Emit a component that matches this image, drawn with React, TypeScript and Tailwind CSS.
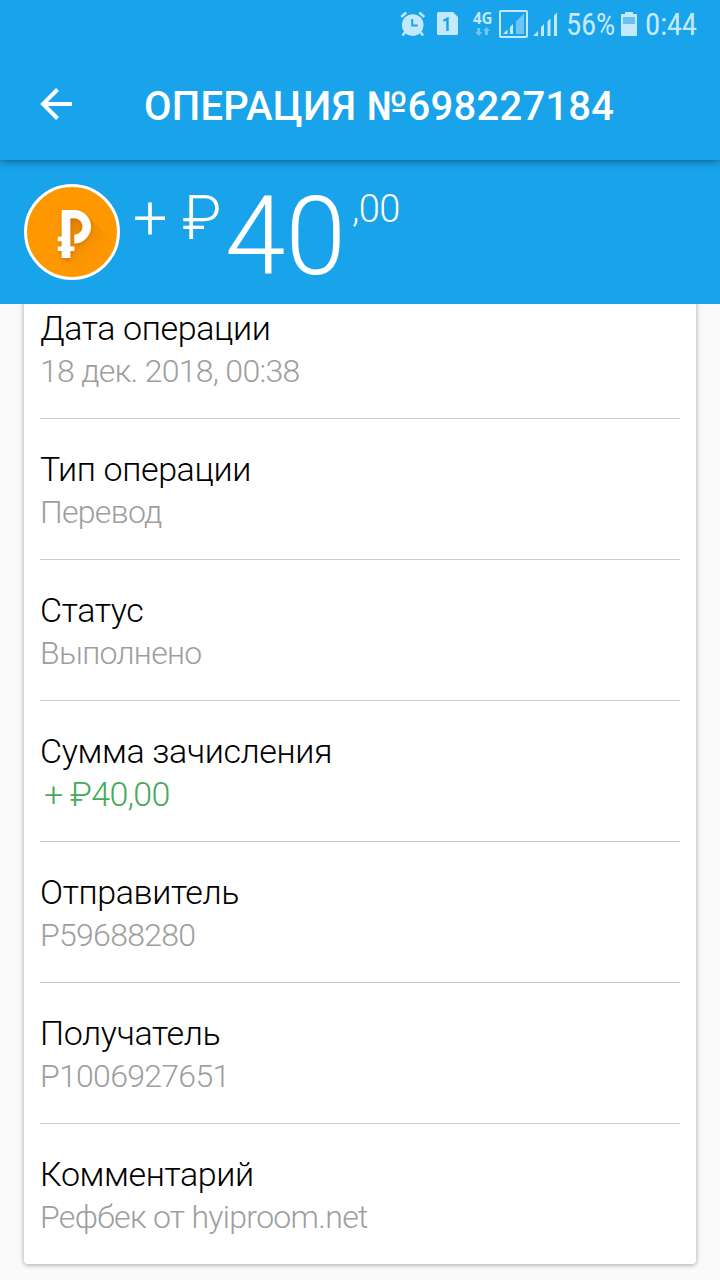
import React from "react";

const details = [
  { label: "Дата операции", value: "18 дек. 2018, 00:38" },
  { label: "Тип операции", value: "Перевод" },
  { label: "Статус", value: "Выполнено" },
  { label: "Сумма зачисления", value: "+ ₽40,00", income: true },
  { label: "Отправитель", value: "P59688280" },
  { label: "Получатель", value: "P1006927651" },
  { label: "Комментарий", value: "Рефбек от hyiproom.net" },
];

function StatusIcons() {
  return (
    <svg width="160" height="48" viewBox="400 0 160 48" className="shrink-0" fill="#c4e9fd">
      {/* alarm */}
      <circle cx="412.7" cy="25" r="10.8" />
      <path d="M401.200 17l5-4.500M424.300 17l-5-4.500M405.500 31.500l-3 4M420 31.500l3 4" stroke="#c4e9fd" strokeWidth="2.400" />
      <path d="M412.200 19v6.500h5.500" fill="none" stroke="#18a3ea" strokeWidth="2" />
      {/* sim slot */}
      <path d="M438.500 12H453l5 5v16.500a1.500 1.500 0 0 1-1.500 1.500h-18a1.500 1.500 0 0 1-1.500-1.500v-20a1.500 1.500 0 0 1 1.500-1.500z" />
      <path d="M443.500 20.800l4-2V31" fill="none" stroke="#18a3ea" strokeWidth="2.400" />
      {/* network */}
      <text x="473" y="24.300" fontSize="15.500" fontWeight="700" fontFamily="Open Sans, sans-serif" textLength="19.500" lengthAdjust="spacingAndGlyphs">4G</text>
      <path d="M477.200 28h3v4h2l-3.500 4-3.500-4h2zM485 35h3v-4h2l-3.500-4-3.500 4h2z" opacity=".5" />
      {/* signal bars */}
      <rect x="500" y="11" width="27" height="26" rx="1" fill="none" stroke="#c4e9fd" strokeWidth="2" />
      <path d="M503 34l4.500-4.500V34zM510 27l3-3v10h-3z" />
      <path d="M516 21.500l8-8V34h-8z" opacity=".5" />
      <path d="M533 36l5-5v5zM541 27l3-3v12h-3zM547.500 21.500l3-3V36h-3zM554 15.500l3-3V36h-3z" />
    </svg>
  );
}

function Battery() {
  return (
    <svg width="16" height="24" viewBox="0 0 16 24" fill="#c4e9fd">
      <path d="M4 0h8v2h3a1 1 0 0 1 1 1v20a1 1 0 0 1-1 1H1a1 1 0 0 1-1-1V3a1 1 0 0 1 1-1h3z" />
      <path d="M2 5h12v7H2z" fill="#68c0f1" />
    </svg>
  );
}

function Coin() {
  return (
    <svg width="96" height="96" viewBox="0 0 96 96" className="shrink-0">
      <defs>
        <linearGradient id="shade" gradientUnits="userSpaceOnUse" x1="42" y1="38" x2="72" y2="68">
          <stop offset="0" stopColor="#c96f00" stopOpacity=".6" />
          <stop offset="1" stopColor="#f08c00" stopOpacity=".2" />
        </linearGradient>
        <filter id="glow" x="-30%" y="-30%" width="160%" height="160%">
          <feDropShadow dx="0" dy="2" stdDeviation="2" floodColor="#a65a00" floodOpacity=".4" />
        </filter>
      </defs>
      <circle cx="48" cy="48" r="46.500" fill="#ff9800" stroke="#fff" strokeWidth="3" />
      <path d="M64 32l25 25a42 42 0 0 1-32 33L38 73V34z" fill="url(#shade)" />
      <g fill="#fff" filter="url(#glow)">
        <path d="M37.700 26H50.300a16.700 16.700 0 0 1 0 33.400v-8.600a8.300 8.300 0 0 0 0-16.600H46.300V62.500h4.200V67h-4.200v7H37.700v-7h-4v-4.500h4V57.200h-4v-4.500h4z" />
      </g>
    </svg>
  );
}

export default function App() {
  return (
    <div className="flex h-[1280px] w-[720px] flex-col overflow-hidden bg-[#fafafa] font-['Roboto',sans-serif]">
      <header className="relative z-10 h-40 shrink-0 bg-[#18a3ea] text-white shadow-[0_1px_8px_rgba(0,0,0,0.45)]">
        <div className="flex h-12 items-center pl-[400px] text-[#c4e9fd]">
          <StatusIcons />
          <span className="ml-[6px] w-[48px] shrink-0 whitespace-nowrap pt-0.5 text-[31px] leading-[48px] tracking-[-0.4px] [font-stretch:75%]">56%</span>
          <div className="ml-[7px] shrink-0">
            <Battery />
          </div>
          <span className="ml-[8px] shrink-0 whitespace-nowrap pt-0.5 text-[31px] leading-[48px] tracking-[-0.4px] [font-stretch:75%]">0:44</span>
        </div>
        <div className="flex h-28 items-center pl-10">
          <svg width="32" height="32" viewBox="0 0 32 32" fill="none" stroke="#fff" strokeWidth="4">
            <path d="M17.500 1.500L3 16l14.500 14.500M2.500 16H32" />
          </svg>
          <h1 className="ml-[72px] pt-1.5 text-[40px] font-medium leading-[48px] tracking-[0.25px]">ОПЕРАЦИЯ №698227184</h1>
        </div>
      </header>

      <section className="flex h-36 shrink-0 items-start bg-[#18a3ea] pl-6 pt-6 text-white">
        <Coin />
        <div className="ml-[13px] flex items-start whitespace-pre">
          <span className="w-[92px] shrink-0 pt-px text-[61px] font-light leading-[66px]">+ ₽</span>
          <span className="text-[109px] font-light leading-[106px]">40</span>
          <span className="ml-[6px] text-[38px] font-light leading-[50px] tracking-[-0.5px]">,00</span>
        </div>
      </section>

      <div className="flex-1 overflow-hidden px-6 pb-4">
        {/* the list is scrolled a little under the amount bar */}
        <main className="-mt-[26px] h-[986px] rounded bg-white px-4 shadow-[0_1px_5px_rgba(0,0,0,0.35)]">
          {details.map((item) => (
            <div key={item.label} className="border-b border-[#cccccc] pb-[25px] pt-[29px] last:border-b-0">
              <div className="text-[34px] font-light leading-[43px] tracking-[-0.38px] text-black">{item.label}</div>
              {item.income ? (
                <div className="pl-1 text-[34px] font-light leading-[43px] tracking-[-0.7px] text-[#43ab5b]">{item.value}</div>
              ) : (
                <div className="text-[32px] font-light leading-[43px] tracking-[-0.7px] text-[#9e9e9e]">{item.value}</div>
              )}
            </div>
          ))}
        </main>
      </div>
    </div>
  );
}
